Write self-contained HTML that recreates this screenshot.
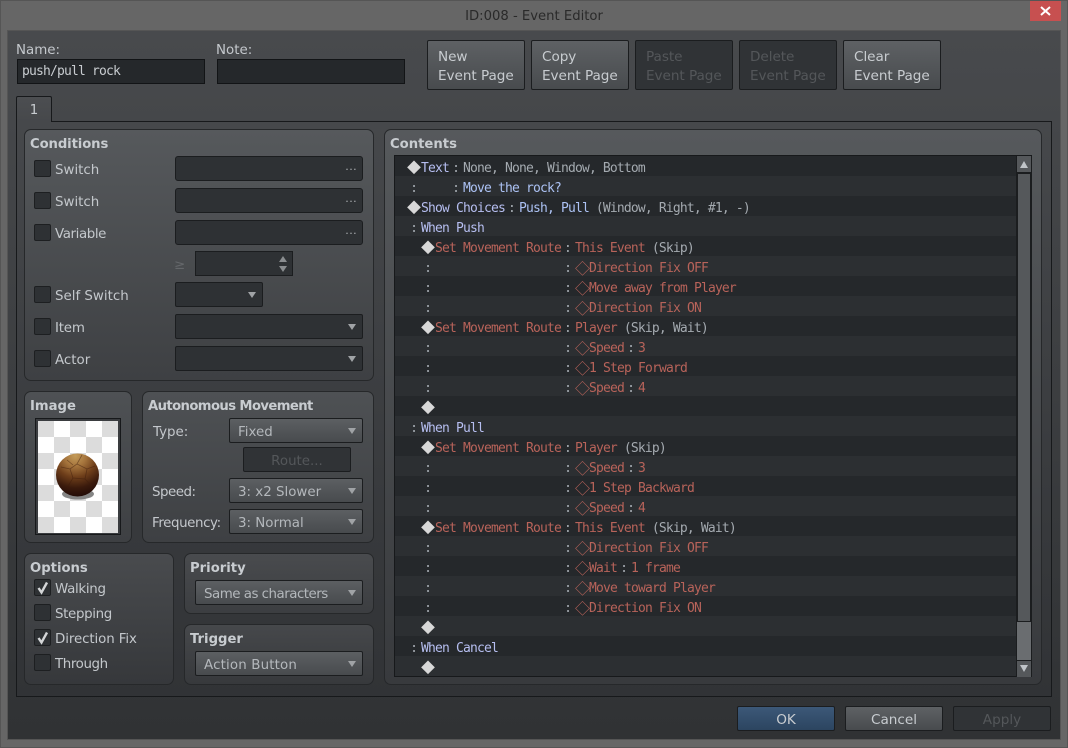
<!DOCTYPE html>
<html><head><meta charset="utf-8"><style>
html,body{margin:0;padding:0;background:#666}
body{width:1068px;height:748px;overflow:hidden;position:relative;font-family:"DejaVu Sans","Liberation Sans",sans-serif;font-size:13.4px;color:#c4c8cc}
div,span{box-sizing:border-box}
.a{position:absolute}
.t{position:absolute;white-space:nowrap;line-height:16px;height:16px;margin-top:2px}
.g{position:absolute;border:1px solid #26282a;border-radius:7px;background:linear-gradient(#56595c,#3e4043)}
.gt{position:absolute;font-weight:bold;font-size:13.2px;color:#c8ccd0;white-space:nowrap;line-height:16px;height:16px;margin-top:2px}
.cb{position:absolute;width:17px;height:17px;background:#2e3134;border:1px solid #1d1f21;border-radius:2px;left:34px}
.f{position:absolute;height:25px;border:1px solid #1b1d1f;border-radius:2px;background:#2e3134}
.s{position:absolute;height:25px;border:1px solid #1b1d1f;border-radius:2px;background:linear-gradient(#5c5f62,#484b4e);line-height:27px;padding-left:8px;white-space:nowrap;color:#b4b8bc}
.s.d{background:#2e3134}
.ar{position:absolute;right:6px;top:9px;width:0;height:0;border-left:4px solid transparent;border-right:4px solid transparent;border-top:6px solid #a0a3a6}
.dots{position:absolute;right:5px;top:4px;line-height:18px;font-size:11px;color:#b0b3b6;letter-spacing:.4px}
.b{position:absolute;width:98px;height:50px;top:40px;border:1px solid #1b1d1f;border-radius:2px;background:linear-gradient(#5e6164,#484b4e);padding:7px 0 0 10px;line-height:19px;font-size:13.6px;color:#c8ccd0;letter-spacing:-.05px}
.b.d{background:#303336;color:#54575a}
.bb{position:absolute;width:98px;height:25px;top:706px;border:1px solid #1b1d1f;border-radius:2px;text-align:center;line-height:27px;font-size:13.6px;background:linear-gradient(#5e6164,#484b4e);color:#c8ccd0}
#list{position:absolute;left:394px;top:155px;width:638px;height:522px;border:1px solid #17191b;background:#26292c;overflow:hidden}
.r{position:absolute;left:0;width:622px;height:20px;line-height:25px;white-space:pre;font-family:"DejaVu Sans Mono","Liberation Mono","Noto Sans CJK JP",monospace;font-size:13px;letter-spacing:-.83px;color:#a4aab0;padding-left:12px}
.r:nth-child(even){background:#2c2f32}
.r:nth-child(odd){background:#25282b}
.r.i{padding-left:26px}
.c,.w,.h,.o{display:inline-block;width:14px;text-align:center;letter-spacing:0;vertical-align:top}
.c{color:#a4aab0}
.w,.h{font-family:"Noto Sans CJK JP",sans-serif;font-size:14px;color:#d8d8d8}
.o{font-family:"Noto Sans CJK JP",sans-serif;font-size:15px;color:#b8635a}
.sp{margin-left:126px}
.l{color:#b6bef0}
.u{color:#acc2f4}
.m{color:#b8635a}
</style></head><body>
<div class="a" style="left:0;top:0;width:1068px;height:748px;background:#666;border:1px solid #555"></div>
<div class="t" style="left:434px;width:200px;top:7px;text-align:center;color:#2a2a2a;font-size:13.2px">ID:008 - Event Editor</div>
<div class="a" style="left:1030px;top:1px;width:31px;height:20px;background:#c75050"></div>
<svg class="a" style="left:1030px;top:1px" width="31" height="20"><path d="M11 6L20 14M20 6L11 14" stroke="#fff" stroke-width="2" fill="none"/></svg>
<div class="a" style="left:7px;top:30px;width:1054px;height:710px;background:linear-gradient(#484a4d,#303234);border:1px solid #555"></div>

<div class="t" style="left:16px;top:41px">Name:</div>
<div class="t" style="left:216px;top:41px">Note:</div>
<div class="a" style="left:17px;top:59px;width:188px;height:25px;border:1px solid #121416;background:#25282b;font-family:'DejaVu Sans Mono',monospace;font-size:13px;letter-spacing:-.83px;line-height:24px;padding-left:4px;color:#c8ccd0">push/pull rock</div>
<div class="a" style="left:217px;top:59px;width:188px;height:25px;border:1px solid #121416;background:#25282b"></div>

<div class="b" style="left:427px">New<br>Event Page</div>
<div class="b" style="left:531px">Copy<br>Event Page</div>
<div class="b d" style="left:635px">Paste<br>Event Page</div>
<div class="b d" style="left:739px">Delete<br>Event Page</div>
<div class="b" style="left:843px">Clear<br>Event Page</div>

<div class="a" style="left:16px;top:121px;width:1036px;height:576px;border:1px solid #17191b;background:linear-gradient(#46484b,#313336)"></div>
<div class="a" style="left:16px;top:96px;width:36px;height:26px;border:1px solid #17191b;border-bottom:0;border-radius:2px 2px 0 0;background:linear-gradient(#4c4e51,#46484b);text-align:center;line-height:28px;color:#c8ccd0">1</div>

<div class="g" style="left:24px;top:129px;width:350px;height:252px"></div>
<div class="gt" style="left:30px;top:135px;letter-spacing:-.1px">Conditions</div>
<div class="cb" style="top:160px"></div><div class="t" style="left:55px;top:161px">Switch</div>
<div class="f" style="left:175px;top:156px;width:188px;border-radius:3px"><span class="dots">···</span></div>
<div class="cb" style="top:192px"></div><div class="t" style="left:55px;top:193px">Switch</div>
<div class="f" style="left:175px;top:188px;width:188px;border-radius:3px"><span class="dots">···</span></div>
<div class="cb" style="top:224px"></div><div class="t" style="left:55px;top:225px;letter-spacing:-.4px">Variable</div>
<div class="f" style="left:175px;top:220px;width:188px;border-radius:3px"><span class="dots">···</span></div>
<div class="t" style="left:174px;top:256px;color:#64676a">≥</div>
<div class="f" style="left:195px;top:251px;width:98px;border-radius:0">
<div class="a" style="right:5px;top:4px;border-left:4px solid transparent;border-right:4px solid transparent;border-bottom:6px solid #8a8d90"></div>
<div class="a" style="right:5px;top:14px;border-left:4px solid transparent;border-right:4px solid transparent;border-top:6px solid #8a8d90"></div></div>
<div class="cb" style="top:286px"></div><div class="t" style="left:55px;top:287px">Self Switch</div>
<div class="s d" style="left:175px;top:282px;width:88px"><i class="ar"></i></div>
<div class="cb" style="top:318px"></div><div class="t" style="left:55px;top:319px;letter-spacing:-.2px">Item</div>
<div class="s d" style="left:175px;top:314px;width:188px"><i class="ar"></i></div>
<div class="cb" style="top:350px"></div><div class="t" style="left:55px;top:351px">Actor</div>
<div class="s d" style="left:175px;top:346px;width:188px"><i class="ar"></i></div>

<div class="g" style="left:24px;top:391px;width:108px;height:152px;background:linear-gradient(#4e5154,#3e4043)"></div>
<div class="gt" style="left:30px;top:397px">Image</div>
<div class="a" style="left:35px;top:418px;width:86px;height:117px;border:1px solid #17191b;background:#3a3c3f"></div>
<svg class="a" style="left:38px;top:421px" width="80" height="112" viewBox="0 0 80 112">
<defs><radialGradient id="rk" cx=".45" cy=".05" r="1"><stop offset="0" stop-color="#c49c5a"/><stop offset=".25" stop-color="#a5743c"/><stop offset=".5" stop-color="#6e3e1a"/><stop offset=".75" stop-color="#3a1a0c"/><stop offset="1" stop-color="#1e0907"/></radialGradient></defs>
<rect width="80" height="112" fill="#fff"/>
<path d="M0 0h16v16H0zM32 0h16v16H32zM64 0h16v16H64zM16 16h16v16H16zM48 16h16v16H48zM0 32h16v16H0zM32 32h16v16H32zM64 32h16v16H64zM16 48h16v16H16zM48 48h16v16H48zM0 64h16v16H0zM32 64h16v16H32zM64 64h16v16H64zM16 80h16v16H16zM48 80h16v16H48zM0 96h16v16H0zM32 96h16v16H32zM64 96h16v16H64z" fill="#dcdcdc"/>
<ellipse cx="40" cy="73" rx="16" ry="5.5" fill="#868686"/>
<circle cx="39.5" cy="54" r="21.5" fill="url(#rk)"/>
<path d="M23 46l9 2 7-5 5-9M32 48l3 9-6 10M39 43l10 5 8-3M49 48l-2 10 7 7M35 57l12 1M29 39l6 5" stroke="#3d1c0c" stroke-width=".8" stroke-opacity=".5" fill="none"/>
</svg>

<div class="g" style="left:142px;top:391px;width:232px;height:152px;background:linear-gradient(#4e5154,#3e4043)"></div>
<div class="gt" style="left:148px;top:397px;letter-spacing:-.6px">Autonomous Movement</div>
<div class="t" style="left:153px;top:423px">Type:</div>
<div class="s" style="left:229px;top:418px;width:134px">Fixed<i class="ar"></i></div>
<div class="a" style="left:243px;top:447px;width:108px;height:25px;border:1px solid #1b1d1f;border-radius:2px;background:#303336;color:#54575a;text-align:center;line-height:27px">Route...</div>
<div class="t" style="left:152px;top:483px;letter-spacing:-.5px">Speed:</div>
<div class="s" style="left:229px;top:478px;width:134px">3: x2 Slower<i class="ar"></i></div>
<div class="t" style="left:152px;top:514px;letter-spacing:-.4px">Frequency:</div>
<div class="s" style="left:229px;top:509px;width:134px">3: Normal<i class="ar"></i></div>

<div class="g" style="left:24px;top:553px;width:150px;height:132px;background:linear-gradient(#494b4e,#36383b)"></div>
<div class="gt" style="left:30px;top:559px">Options</div>
<div class="cb" style="top:579px"></div><div class="t" style="left:55px;top:580px;letter-spacing:-.3px">Walking</div>
<svg class="a" style="left:34px;top:579px" width="17" height="17"><path d="M4.5 9l3 4.5 5.5-10" stroke="#d4d6d8" stroke-width="2.4" fill="none"/></svg>
<div class="cb" style="top:604px"></div><div class="t" style="left:55px;top:605px;letter-spacing:-.35px">Stepping</div>
<div class="cb" style="top:629px"></div><div class="t" style="left:55px;top:630px;letter-spacing:-.1px">Direction Fix</div>
<svg class="a" style="left:34px;top:629px" width="17" height="17"><path d="M4.5 9l3 4.5 5.5-10" stroke="#d4d6d8" stroke-width="2.4" fill="none"/></svg>
<div class="cb" style="top:654px"></div><div class="t" style="left:55px;top:655px;letter-spacing:-.4px">Through</div>

<div class="g" style="left:184px;top:553px;width:190px;height:61px;background:linear-gradient(#494b4e,#3c3e41)"></div>
<div class="gt" style="left:190px;top:559px">Priority</div>
<div class="s" style="left:195px;top:580px;width:168px;letter-spacing:-.5px">Same as characters<i class="ar"></i></div>
<div class="g" style="left:184px;top:624px;width:190px;height:61px;background:linear-gradient(#46484b,#37393c)"></div>
<div class="gt" style="left:190px;top:630px">Trigger</div>
<div class="s" style="left:195px;top:651px;width:168px;letter-spacing:.15px">Action Button<i class="ar"></i></div>

<div class="g" style="left:384px;top:129px;width:658px;height:556px;background:linear-gradient(#56595c,#383a3d)"></div>
<div class="gt" style="left:390px;top:135px">Contents</div>
<div id="list">
<div class="r" style="top:0"><span class="w">◆</span><span class="l">Text</span><span class="c">:</span>None, None, Window, Bottom</div>
<div class="r" style="top:20px"><span class="c">:</span>    <span class="c">:</span><span class="u">Move the rock?</span></div>
<div class="r" style="top:40px"><span class="w">◆</span><span class="l">Show Choices</span><span class="c">:</span><span class="u">Push, Pull</span> (Window, Right, #1, -)</div>
<div class="r" style="top:60px"><span class="c">:</span><span class="l">When Push</span></div>
<div class="r i" style="top:80px"><span class="w">◆</span><span class="m">Set Movement Route</span><span class="c">:</span><span class="m">This Event</span> (Skip)</div>
<div class="r i" style="top:100px"><span class="c">:</span><span class="c sp">:</span><span class="o">◇</span><span class="m">Direction Fix OFF</span></div>
<div class="r i" style="top:120px"><span class="c">:</span><span class="c sp">:</span><span class="o">◇</span><span class="m">Move away from Player</span></div>
<div class="r i" style="top:140px"><span class="c">:</span><span class="c sp">:</span><span class="o">◇</span><span class="m">Direction Fix ON</span></div>
<div class="r i" style="top:160px"><span class="w">◆</span><span class="m">Set Movement Route</span><span class="c">:</span><span class="m">Player</span> (Skip, Wait)</div>
<div class="r i" style="top:180px"><span class="c">:</span><span class="c sp">:</span><span class="o">◇</span><span class="m">Speed</span><span class="c">:</span><span class="m">3</span></div>
<div class="r i" style="top:200px"><span class="c">:</span><span class="c sp">:</span><span class="o">◇</span><span class="m">1 Step Forward</span></div>
<div class="r i" style="top:220px"><span class="c">:</span><span class="c sp">:</span><span class="o">◇</span><span class="m">Speed</span><span class="c">:</span><span class="m">4</span></div>
<div class="r i" style="top:240px"><span class="w">◆</span></div>
<div class="r" style="top:260px"><span class="c">:</span><span class="l">When Pull</span></div>
<div class="r i" style="top:280px"><span class="w">◆</span><span class="m">Set Movement Route</span><span class="c">:</span><span class="m">Player</span> (Skip)</div>
<div class="r i" style="top:300px"><span class="c">:</span><span class="c sp">:</span><span class="o">◇</span><span class="m">Speed</span><span class="c">:</span><span class="m">3</span></div>
<div class="r i" style="top:320px"><span class="c">:</span><span class="c sp">:</span><span class="o">◇</span><span class="m">1 Step Backward</span></div>
<div class="r i" style="top:340px"><span class="c">:</span><span class="c sp">:</span><span class="o">◇</span><span class="m">Speed</span><span class="c">:</span><span class="m">4</span></div>
<div class="r i" style="top:360px"><span class="w">◆</span><span class="m">Set Movement Route</span><span class="c">:</span><span class="m">This Event</span> (Skip, Wait)</div>
<div class="r i" style="top:380px"><span class="c">:</span><span class="c sp">:</span><span class="o">◇</span><span class="m">Direction Fix OFF</span></div>
<div class="r i" style="top:400px"><span class="c">:</span><span class="c sp">:</span><span class="o">◇</span><span class="m">Wait</span><span class="c">:</span><span class="m">1 frame</span></div>
<div class="r i" style="top:420px"><span class="c">:</span><span class="c sp">:</span><span class="o">◇</span><span class="m">Move toward Player</span></div>
<div class="r i" style="top:440px"><span class="c">:</span><span class="c sp">:</span><span class="o">◇</span><span class="m">Direction Fix ON</span></div>
<div class="r i" style="top:460px"><span class="w">◆</span></div>
<div class="r" style="top:480px"><span class="c">:</span><span class="l">When Cancel</span></div>
<div class="r i" style="top:500px"><span class="w">◆</span></div>
</div>
<div class="a" style="left:1016px;top:156px;width:16px;height:521px;background:#6a6d70;border-left:1px solid #1b1d1f;border-right:1px solid #1b1d1f"></div>
<div class="a" style="left:1016px;top:156px;width:16px;height:17px;background:#55585b;border:1px solid #1b1d1f;border-top:0"></div>
<div class="a" style="left:1020px;top:161px;border-left:4px solid transparent;border-right:4px solid transparent;border-bottom:7px solid #c0c4c8"></div>
<div class="a" style="left:1017px;top:173px;width:14px;height:449px;background:#55585b;border:1px solid #1b1d1f"></div>
<div class="a" style="left:1016px;top:660px;width:16px;height:17px;background:#55585b;border:1px solid #1b1d1f;border-bottom:0"></div>
<div class="a" style="left:1020px;top:665px;border-left:4px solid transparent;border-right:4px solid transparent;border-top:7px solid #c0c4c8"></div>

<div class="bb" style="left:737px;background:linear-gradient(#3c5878,#2c4560)">OK</div>
<div class="bb" style="left:845px">Cancel</div>
<div class="bb" style="left:953px;background:#303336;color:#54575a">Apply</div>
</body></html>
